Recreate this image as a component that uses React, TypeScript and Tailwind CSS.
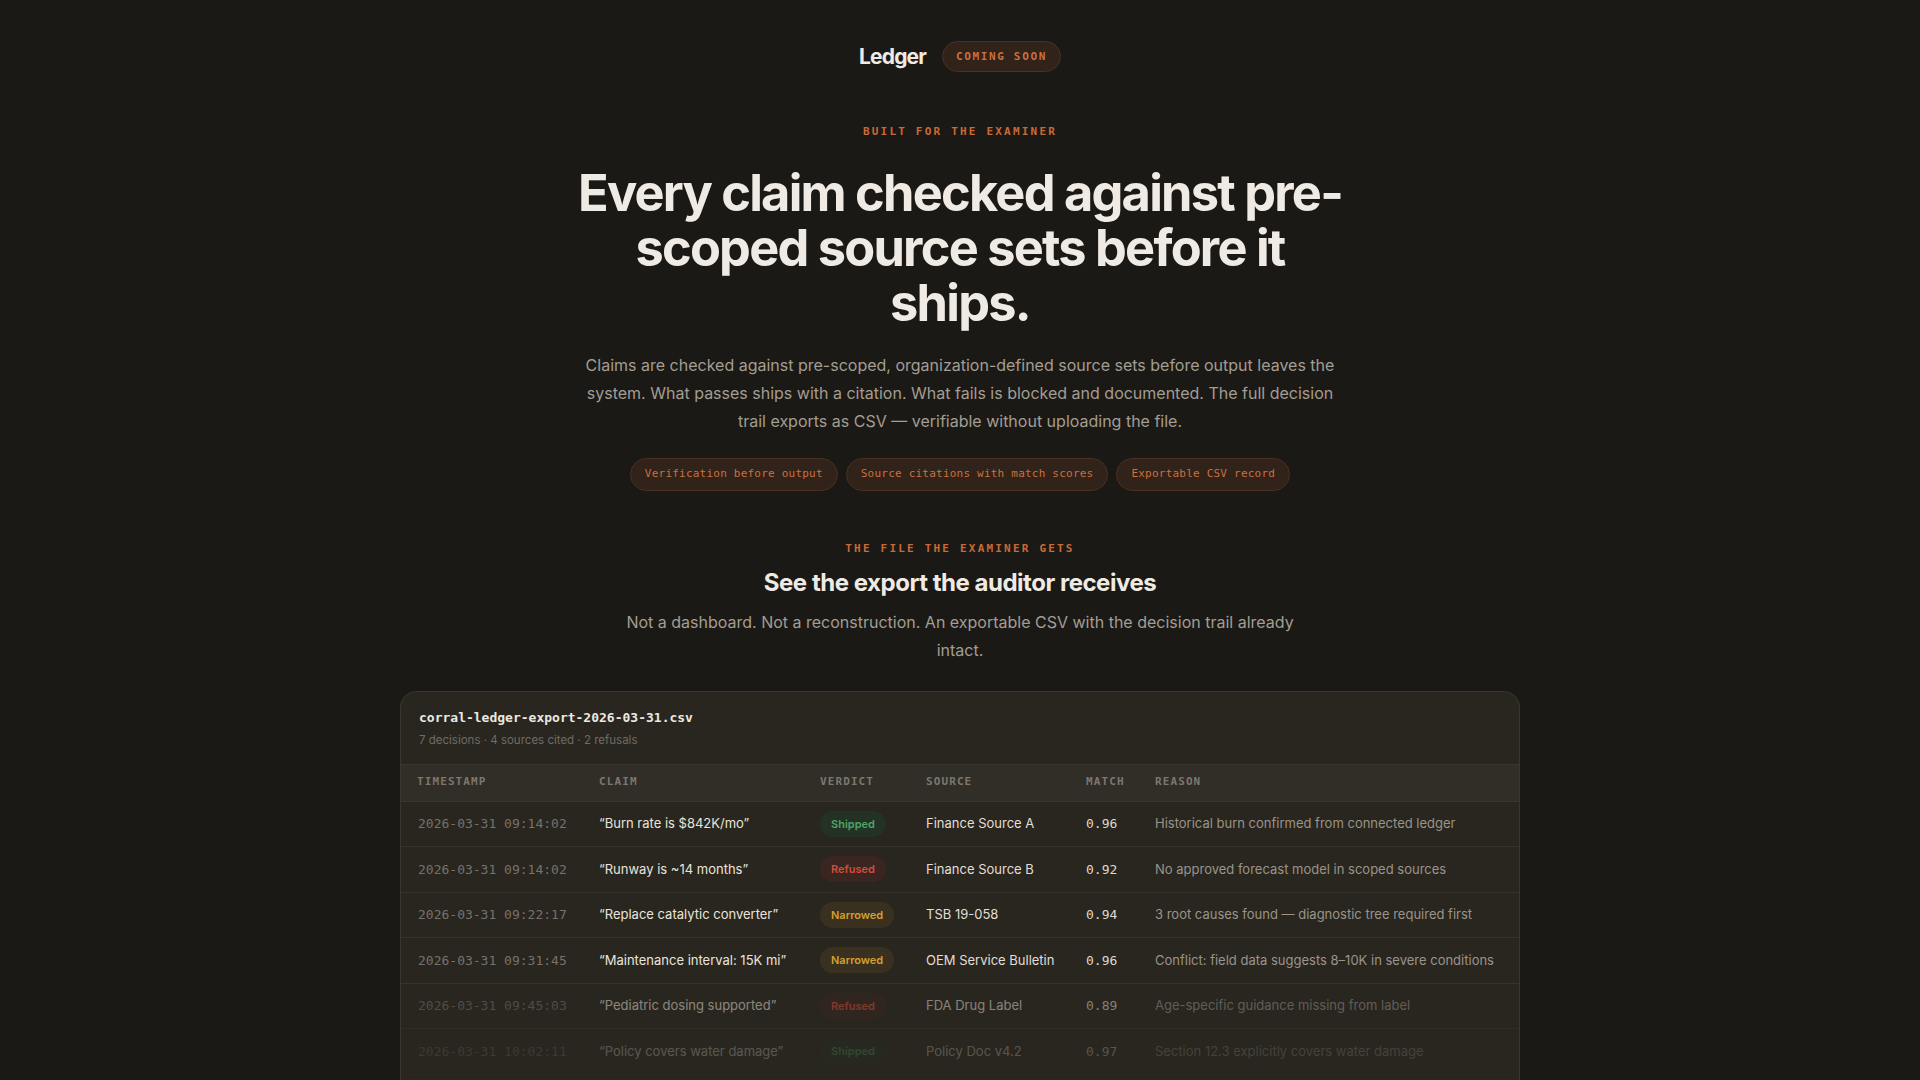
type Verdict = "Shipped" | "Refused" | "Narrowed";

type Row = {
  time: string;
  claim: string;
  verdict: Verdict;
  source: string;
  match: string;
  reason: string;
  fade: string;
};

const rows: Row[] = [
  {
    time: "2026-03-31 09:14:02",
    claim: "“Burn rate is $842K/mo”",
    verdict: "Shipped",
    source: "Finance Source A",
    match: "0.96",
    reason: "Historical burn confirmed from connected ledger",
    fade: "",
  },
  {
    time: "2026-03-31 09:14:02",
    claim: "“Runway is ~14 months”",
    verdict: "Refused",
    source: "Finance Source B",
    match: "0.92",
    reason: "No approved forecast model in scoped sources",
    fade: "",
  },
  {
    time: "2026-03-31 09:22:17",
    claim: "“Replace catalytic converter”",
    verdict: "Narrowed",
    source: "TSB 19-058",
    match: "0.94",
    reason: "3 root causes found — diagnostic tree required first",
    fade: "",
  },
  {
    time: "2026-03-31 09:31:45",
    claim: "“Maintenance interval: 15K mi”",
    verdict: "Narrowed",
    source: "OEM Service Bulletin",
    match: "0.96",
    reason: "Conflict: field data suggests 8–10K in severe conditions",
    fade: "",
  },
  {
    time: "2026-03-31 09:45:03",
    claim: "“Pediatric dosing supported”",
    verdict: "Refused",
    source: "FDA Drug Label",
    match: "0.89",
    reason: "Age-specific guidance missing from label",
    fade: "opacity-50",
  },
  {
    time: "2026-03-31 10:02:11",
    claim: "“Policy covers water damage”",
    verdict: "Shipped",
    source: "Policy Doc v4.2",
    match: "0.97",
    reason: "Section 12.3 explicitly covers water damage",
    fade: "opacity-25",
  },
  {
    time: "2026-03-31 10:17:38",
    claim: "“Coverage includes flood”",
    verdict: "Refused",
    source: "Policy Doc v4.2",
    match: "0.91",
    reason: "Flood exclusion stated in Section 14.1",
    fade: "opacity-10",
  },
];

const mono = "font-['DejaVu_Sans_Mono','Liberation_Mono',monospace]";

function Badge({ verdict }: { verdict: Verdict }) {
  const tone =
    verdict === "Shipped"
      ? "bg-[#243226] text-[#4ea565]"
      : verdict === "Refused"
        ? "bg-[#3a2521] text-[#d24e3c]"
        : "bg-[#3a3020] text-[#d3a02f]";
  return (
    <span className={`inline-flex h-[26px] items-center rounded-full px-[11px] text-[11px] font-semibold ${tone}`}>
      {verdict}
    </span>
  );
}

export default function App() {
  return (
    <div className="min-h-screen bg-[#1b1915] font-['Inter',sans-serif] text-[#efebe4]">
      <main className="flex flex-col items-center">
        {/* Top bar */}
        <header className="flex items-center gap-4 pt-[41px]">
          <span className="text-[21px] font-bold tracking-[-0.04em] text-[#efebe4]">Ledger</span>
          <span
            className={`${mono} flex h-[31px] items-center rounded-full border border-[#4b3121] bg-[#31221a] px-[13px] text-[11px] font-bold tracking-[0.15em] text-[#cc703c]`}
          >
            COMING SOON
          </span>
        </header>

        {/* Hero */}
        <p className={`${mono} mt-[51px] text-[11px] font-bold leading-4 tracking-[0.2em] text-[#c96a36]`}>
          BUILT FOR THE EXAMINER
        </p>
        <h1 className="mt-[25px] max-w-[790px] text-center text-[50.5px] font-bold leading-[55px] tracking-[-0.035em] text-[#efebe4]">
          Every claim checked against pre-scoped source sets before it ships.
        </h1>
        <p className="mt-[21px] max-w-[760px] text-center text-[16px] leading-[28px] text-[#a39d93]">
          Claims are checked against pre-scoped, organization-defined source sets before output leaves the
          system. What passes ships with a citation. What fails is blocked and documented. The full decision
          trail exports as CSV — verifiable without uploading the file.
        </p>
        <div className="mt-[23px] flex gap-2">
          {["Verification before output", "Source citations with match scores", "Exportable CSV record"].map((t) => (
            <span
              key={t}
              className={`${mono} flex h-[33px] items-center rounded-full border border-[#4b3121] bg-[#31221a] px-[14px] text-[11px] tracking-[0.02em] text-[#cc703c]`}
            >
              {t}
            </span>
          ))}
        </div>

        {/* Export section */}
        <p className={`${mono} mt-[50px] text-[11px] font-bold leading-4 tracking-[0.2em] text-[#c96a36]`}>
          THE FILE THE EXAMINER GETS
        </p>
        <h2 className="mt-[10px] text-[24px] font-bold leading-8 tracking-[-0.02em] text-[#efebe4]">
          See the export the auditor receives
        </h2>
        <p className="mt-[9px] max-w-[690px] text-center text-[16px] leading-[28px] text-[#a39d93]">
          Not a dashboard. Not a reconstruction. An exportable CSV with the decision trail already intact.
        </p>

        <div className="mt-[27px] w-[1120px] overflow-hidden rounded-2xl border border-[#3a362f] bg-[#29261f]">
          <div className="px-[18px] pt-[16px] pb-[16px]">
            <div className={`${mono} text-[13px] font-bold leading-5 text-[#ece8e0]`}>
              corral-ledger-export-2026-03-31.csv
            </div>
            <div className="mt-[4px] text-[11.5px] leading-4 text-[#716b63]">
              7 decisions · 4 sources cited · 2 refusals
            </div>
          </div>

          <div
            className={`${mono} grid h-[38px] grid-cols-[182px_221px_106px_160px_69px_1fr] items-center border-y border-[#3a362f] bg-[#312d27] px-4 text-[11px] font-bold tracking-[0.1em] text-[#7d776e]`}
          >
            <span>TIMESTAMP</span>
            <span>CLAIM</span>
            <span>VERDICT</span>
            <span>SOURCE</span>
            <span>MATCH</span>
            <span>REASON</span>
          </div>

          {rows.map((r) => (
            <div
              key={r.time + r.claim}
              className={`grid h-[45.5px] grid-cols-[182px_221px_106px_160px_69px_1fr] items-center border-b border-[#36322c] px-4 text-[13px] ${r.fade}`}
            >
              <span className={`${mono} pl-[1px] text-[#77716a]`}>{r.time}</span>
              <span className="text-[#e8e4dc]">{r.claim}</span>
              <span>
                <Badge verdict={r.verdict} />
              </span>
              <span className="text-[#e2ded6]">{r.source}</span>
              <span className={`${mono} text-[#dcd8d0]`}>{r.match}</span>
              <span className="text-[#9a948a]">{r.reason}</span>
            </div>
          ))}
        </div>
      </main>
    </div>
  );
}
